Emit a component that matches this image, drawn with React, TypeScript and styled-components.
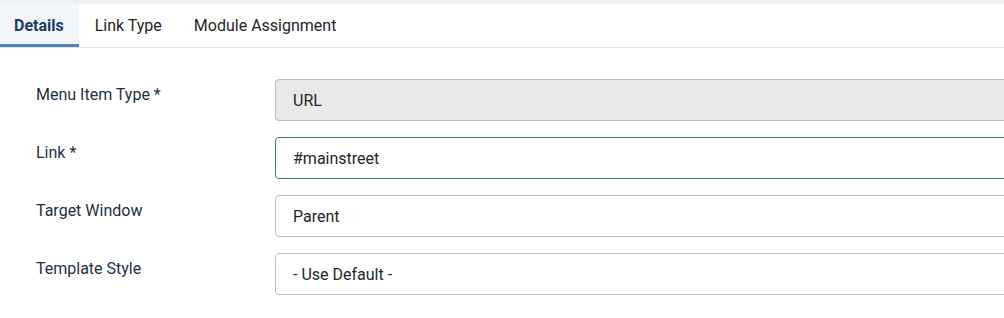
import styled, { createGlobalStyle } from "styled-components";

const GlobalStyle = createGlobalStyle`
	html, body {
		margin: 0;
		padding: 0;
		background: #fff;
		overflow: hidden;
	}
	body {
		font-family: Roboto, "Liberation Sans", sans-serif;
		color: #22262a;
	}
`;

const tabs = ["Details", "Link Type", "Module Assignment"];

const fields = [
	{ label: "Menu Item Type *", value: "URL", kind: "readonly" },
	{ label: "Link *", value: "#mainstreet", kind: "valid" },
	{ label: "Target Window", value: "Parent", kind: "normal" },
	{ label: "Template Style", value: "- Use Default -", kind: "normal" },
];

function App() {
	return (
		<Page>
			<GlobalStyle />
			<TopStrip />
			<TabBar>
				{tabs.map((t, i) => (
					<Tab key={t} $active={i === 0}>
						{t}
					</Tab>
				))}
			</TabBar>
			<Form>
				{fields.map((f) => (
					<Row key={f.label}>
						<Label>{f.label}</Label>
						<Input $kind={f.kind}>{f.value}</Input>
					</Row>
				))}
			</Form>
		</Page>
	);
}

export default App;

const Page = styled.div`
	width: 1004px;
	height: 318px;
	overflow: hidden;
	background: #fff;
`;

const TopStrip = styled.div`
	height: 4px;
	background: #edf1f7;
`;

const TabBar = styled.div`
	display: flex;
	border-bottom: 1px solid #dfe3ea;
`;

const Tab = styled.div<{ $active: boolean }>`
	box-sizing: border-box;
	height: 43px;
	padding: 3px 15px 0 14px;
	display: flex;
	align-items: center;
	font-size: 16px;
	color: ${(p) => (p.$active ? "#1c3d5a" : "#22262a")};
	font-weight: ${(p) => (p.$active ? 700 : 400)};
	background: ${(p) => (p.$active ? "#f2f5f9" : "transparent")};
	border-bottom: 3px solid ${(p) => (p.$active ? "#5780bf" : "transparent")};
	& + & {
		padding: 3px 16px 0;
	}
`;

const Form = styled.div`
	padding: 31px 0 0 36px;
	display: flex;
	flex-direction: column;
	gap: 16px;
`;

const Row = styled.div`
	display: flex;
	align-items: flex-start;
`;

const Label = styled.div`
	width: 239px;
	flex-shrink: 0;
	padding-top: 4px;
	font-size: 16px;
	line-height: 24px;
	color: #1f2f47;
`;

const Input = styled.div<{ $kind: string }>`
	box-sizing: border-box;
	width: 800px;
	flex-shrink: 0;
	height: 42px;
	padding: 0 17px;
	display: flex;
	align-items: center;
	font-size: 16px;
	color: #22262a;
	border-radius: 4px;
	border: 1px solid ${(p) => (p.$kind === "valid" ? "#457d54" : "#b2bfd3")};
	background: ${(p) => (p.$kind === "readonly" ? "#e9e9e9" : "#fff")};
`;
